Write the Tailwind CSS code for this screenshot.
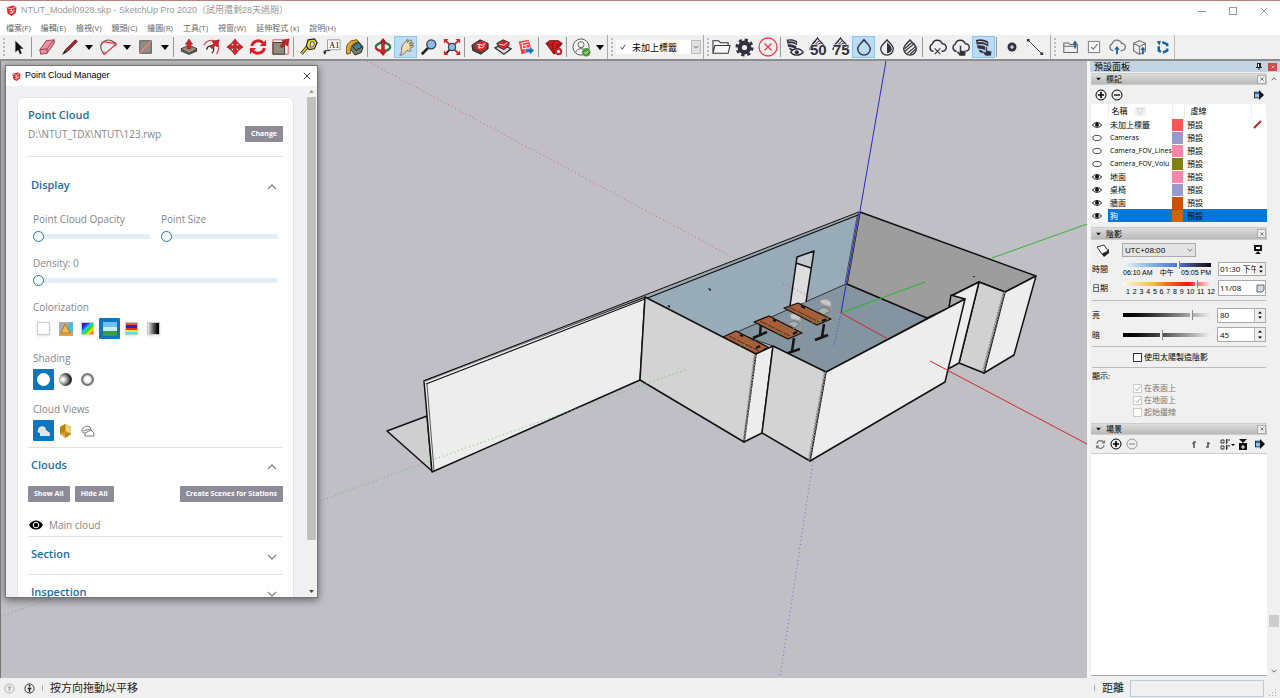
<!DOCTYPE html>
<html lang="zh-Hant">

<head>
    <meta charset="UTF-8" />
    <meta name="viewport" content="width=device-width, initial-scale=1.0" />
    <title>NTUT_Model0928.skp - SketchUp Pro 2020</title>
    <script src="https://cdn.jsdelivr.net/npm/@tailwindcss/browser@4"></script>
</head>

<body class="h-screen overflow-hidden flex flex-col bg-[#f0f0f0] border-t border-[#b38480] text-[9px] text-black font-['Open_Sans','Noto_Sans_CJK_TC',sans-serif]">
    <!-- shared icons -->
    <svg class="hidden">
        <symbol id="logo" viewBox="0 0 20 20">
            <path d="M1 4 13 1l6 3-1 10-8 6-7-4z" fill="#e3252c" />
            <path d="M2 5l8 2 7-3M6 10l6 1 4-2M6 14l4 1 5-3M10 7v4M11 11v4" fill="none" stroke="#fff" stroke-width="1.300" />
        </symbol>
        <symbol id="eye" viewBox="0 0 10 8">
            <path d="M.5 4C2.500.8 7.500.8 9.500 4 7.500 7 2.500 7 .5 4z" fill="#fff" stroke="#111" stroke-width="1" />
            <circle cx="5" cy="3.800" r="2" fill="#111" />
        </symbol>
        <symbol id="eye-off" viewBox="0 0 10 8">
            <ellipse cx="5" cy="4" rx="4.200" ry="2.600" fill="#fff" stroke="#333" stroke-width=".9" />
        </symbol>
        <symbol id="plus" viewBox="0 0 12 12">
            <path d="M6 3v6M3 6h6" stroke="currentColor" stroke-width="1.600" />
            <circle cx="6" cy="6" r="5" fill="none" stroke="currentColor" stroke-width="1" />
        </symbol>
        <symbol id="minus" viewBox="0 0 12 12">
            <path d="M3 6h6" stroke="currentColor" stroke-width="1.300" />
            <circle cx="6" cy="6" r="5" fill="none" stroke="currentColor" stroke-width="1" />
        </symbol>
        <symbol id="detail" viewBox="0 0 12 12">
            <path d="M0 2h6V0l6 6-6 6v-2H0z" fill="#111" />
            <path d="M1 3h5v6H1z" fill="#8cc4ee" />
            <path d="M1 3h5v1.500H1z" fill="#1f4e86" />
        </symbol>
        <symbol id="x" viewBox="0 0 10 10">
            <path d="M1 1l8 8M9 1 1 9" stroke="currentColor" stroke-width="1.200" />
        </symbol>
        <symbol id="down" viewBox="0 0 10 6">
            <path d="M1 1l4 4 4-4" fill="none" stroke="currentColor" stroke-width="1.300" />
        </symbol>
        <symbol id="up" viewBox="0 0 10 6">
            <path d="M1 5l4-4 4 4" fill="none" stroke="currentColor" stroke-width="1.300" />
        </symbol>
        <symbol id="tri" viewBox="0 0 8 5">
            <path d="M0 0h8L4 5z" fill="currentColor" />
        </symbol>
        <symbol id="cloud" viewBox="0 0 20 20">
            <path d="M6 14H5a4 4 0 0 1-.5-7.500A5.500 5.500 0 0 1 15 6a4 4 0 0 1 .5 8H14" fill="none" stroke="currentColor" stroke-width="1.500" />
        </symbol>
        <symbol id="layers" viewBox="0 0 20 20">
            <path d="M1 8l9-6 9 4v6l-8 6-9-4z" fill="#4a4640" stroke="#222" />
            <path d="M4 7l8-4 6 3-1 6-6 3-6-3z" fill="#df2a2f" />
            <path d="M7 7l6 1 3-2M8 10l4 1 3-2M9 7v5" stroke="#fff" fill="none" />
        </symbol>
        <symbol id="wall" viewBox="0 0 20 20">
            <path d="M2 2c5-1 8-1 13 2v5c-5-3-8-3-12-2zM3 8c4-1 7 0 11 2v4c-4-2-6-3-10-3zM5 12l8 3v3c-3-2-5-2-7-3z" fill="#33313f" />
            <path d="M4 4c3-1 7 0 10 2" stroke="#ddd" fill="none" />
        </symbol>
        <symbol id="drop-cloud" viewBox="0 0 20 20">
            <path d="M2 13C2 8 7 5 9.500 1 12 5 17 8 17 11" fill="none" stroke="#33313f" stroke-width="1.400" />
            <path d="M3 9l5-5M4 10l7-6M8 8l5-2" stroke="#33313f" />
        </symbol>
    </svg>

    <!-- title bar -->
    <header class="bg-white shrink-0">
        <div class="flex items-center h-[19px] pl-[6px]">
            <svg class="w-[11px] h-[11px] mr-1"><use href="#logo" /></svg>
            <h1 class="text-[9px] text-[#999] font-['Liberation_Sans','Noto_Sans_CJK_TC',sans-serif]">NTUT_Model0928.skp - SketchUp Pro 2020（試用還剩28天過期）</h1>
            <div class="ml-auto flex items-center gap-[23px] pr-3 text-[#999]">
                <button aria-label="Minimize"><svg class="w-2 h-2 block"><path d="M0 4.500h8" stroke="currentColor" /></svg></button>
                <button aria-label="Maximize"><svg class="w-2 h-2 block"><rect x=".5" y=".5" width="7" height="7" fill="none" stroke="currentColor" /></svg></button>
                <button aria-label="Close"><svg class="w-2 h-2 block"><use href="#x" /></svg></button>
            </div>
        </div>
        <nav class="flex items-center h-[15px] pl-[6px] gap-[10px] text-[8px] leading-[14px] text-[#666]">
            <button>檔案(F)</button>
            <button>編輯(E)</button>
            <button>檢視(V)</button>
            <button>鏡頭(C)</button>
            <button>繪圖(R)</button>
            <button>工具(T)</button>
            <button>視窗(W)</button>
            <button>延伸程式 (x)</button>
            <button>說明(H)</button>
        </nav>
    </header>

    <!-- toolbar -->
    <div class="flex items-stretch shrink-0 h-[26px] border-b-2 border-[#8c8e8d] [&>button]:flex [&>button]:items-center [&>button]:justify-center [&>button]:shrink-0 [&>button]:my-px">
        <div class="w-[7px] py-[3px] pl-[3px]"><div class="h-full border-l-2 border-dotted border-[#bbb]"></div></div>
        <button aria-label="Select" class="w-[23px]"><svg class="w-[18px] h-[18px]" viewBox="0 0 20 20"><path d="M6 3v13l3-3 2 5 2-1-2-5h4z" fill="#111" /></svg></button>
        <div class="w-[5px] border-l border-[#999] my-[2px] ml-px -mr-px"></div>
        <button aria-label="Eraser" class="w-[23px]"><svg class="w-[18px] h-[18px]" viewBox="0 0 20 20"><path d="M2 13 9 3l9-1v4l-8 11-7 1z" fill="#f08fa3" stroke="#85424f" /><path d="M2 13l8-1 8-10M10 12v5" stroke="#85424f" fill="none" /></svg></button>
        <button aria-label="Line" class="w-[23px]"><svg class="w-[18px] h-[18px]" viewBox="0 0 20 20"><path d="M3 17 5 13 16 2l2 2L7 15z" fill="#b8262a" stroke="#4a1614" /><path d="M1 19l3-5 2 2z" fill="#222" /></svg></button>
        <button aria-label="Line options" class="w-[15px]"><svg class="w-2 h-[5px]"><use href="#tri" /></svg></button>
        <button aria-label="Arc" class="w-[23px]"><svg class="w-[18px] h-[18px]" viewBox="0 0 20 20"><path d="M6 18C0 12 1 5 7 3c4-2 9 0 12 4" fill="none" stroke="#555" stroke-width="1.300" /><path d="M6 18 19 7M2 8l3-4 13 2" fill="none" stroke="#e23b40" stroke-width="1.300" /><circle cx="6" cy="17" r="1.500" fill="none" stroke="#e23b40" /><circle cx="18" cy="7" r="1.500" fill="none" stroke="#e23b40" /></svg></button>
        <button aria-label="Arc options" class="w-[15px]"><svg class="w-2 h-[5px]"><use href="#tri" /></svg></button>
        <button aria-label="Rectangle" class="w-[23px]"><svg class="w-[18px] h-[18px]" viewBox="0 0 20 20"><path d="M3 3h13v14H3z" fill="#8f8c80" stroke="#555" /><path d="M3 17 16 3" stroke="#f58080" stroke-width="1.500" /></svg></button>
        <button aria-label="Shape options" class="w-[15px]"><svg class="w-2 h-[5px]"><use href="#tri" /></svg></button>
        <div class="w-[5px] border-l border-[#999] my-[2px] ml-px -mr-px"></div>
        <button aria-label="Push/Pull" class="w-[23px]"><svg class="w-[18px] h-[18px]" viewBox="0 0 20 20"><path d="M1 12l9-4 9 4-9 5z" fill="#96927f" stroke="#333" /><path d="M1 12v3l9 4 9-4v-3l-9 5z" fill="#55524a" /><path d="M8 12V7H6l4-6 4 6h-2v5z" fill="#e02228" stroke="#7b1114" stroke-width=".6" /></svg></button>
        <button aria-label="Offset" class="w-[23px]"><svg class="w-[18px] h-[18px]" viewBox="0 0 20 20"><path d="M1 8C5 1 14 1 17 8c1 4 0 7-2 10" fill="none" stroke="#e04a4a" stroke-width="1.400" /><path d="M4 13c1-5 7-6 8-1 0 3-1 4-2 5" fill="none" stroke="#333" stroke-width="1.400" /><path d="M8 10l4-4-2-2 8-2-2 8-2-2-4 4z" fill="#d91e25" stroke="#6b1010" stroke-width=".6" /></svg></button>
        <button aria-label="Move" class="w-[23px]"><svg class="w-[18px] h-[18px]" viewBox="0 0 20 20"><path d="M10 1l4 5h-2.500v2.500H14V6l5 4-5 4v-2.500h-2.500V14H14l-4 5-4-5h2.500v-2.500H6V14l-5-4 5-4v2.500h2.500V6H6z" fill="#dc1f26" stroke="#7b1114" stroke-width=".6" /></svg></button>
        <button aria-label="Rotate" class="w-[23px]"><svg class="w-[18px] h-[18px]" viewBox="0 0 20 20"><path d="M3 9c1-6 9-8 13-3M17 11c-1 6-9 8-13 3" fill="none" stroke="#dc1f26" stroke-width="3.200" /><path d="M19 2v7h-7zM1 18v-7h7z" fill="#dc1f26" /></svg></button>
        <button aria-label="Scale" class="w-[23px]"><svg class="w-[18px] h-[18px]" viewBox="0 0 20 20"><path d="M1 2h17v16H1z" fill="none" stroke="#e64a4a" /><path d="M1 5h13v13H1z" fill="#8f8c7c" stroke="#333" /><path d="M9 9l4-4-2-2 8-2-2 8-2-2-4 4z" fill="#d91e25" stroke="#6b1010" stroke-width=".6" /></svg></button>
        <div class="w-[5px] border-l border-[#999] my-[2px] ml-px -mr-px"></div>
        <button aria-label="Tape measure" class="w-[23px]"><svg class="w-[18px] h-[18px]" viewBox="0 0 20 20"><path d="M9 11l-6 7-2-2 6-7z" fill="#d7c32b" stroke="#222" /><path d="M9 2l7-1 3 4-3 7-6 1-3-4z" fill="#ecd92f" stroke="#222" stroke-width="1.300" /><path d="M12 4h3l1 3-2 3h-3z" fill="#d8d8d0" stroke="#555" /></svg></button>
        <button aria-label="Text" class="w-[23px]"><svg class="w-[18px] h-[18px]" viewBox="0 0 20 20"><path d="M5 2h14v11H5z" fill="#fafafa" stroke="#999" /><path d="M8 14H2v3" fill="none" stroke="#222" /><path d="M0 15h4l-2 4z" fill="#222" /><text x="7" y="11" font-size="9" font-family="Liberation Serif">A1</text></svg></button>
        <button aria-label="Paint bucket" class="w-[23px]"><svg class="w-[18px] h-[18px]" viewBox="0 0 20 20"><path d="M6 5l6-3 7 8-2 6-7 3-6-8z" fill="#7a7a68" stroke="#222" /><path d="M7 9l7-4 4 5-7 4z" fill="#3f8296" stroke="#222" /><path d="M1 18C-1 11 1 6 6 3l6-1 2 2-5 2c-4 3-4 6-4 11z" fill="#e0a32c" stroke="#6a4c15" /></svg></button>
        <div class="w-[5px] border-l border-[#999] my-[2px] ml-px -mr-px"></div>
        <button aria-label="Orbit" class="w-[23px]"><svg class="w-[18px] h-[18px]" viewBox="0 0 20 20"><ellipse cx="10" cy="10" rx="8" ry="4.500" fill="none" stroke="#2c7a48" stroke-width="2.600" /><path d="M8.500 4h3v12h-3z" fill="#db2228" stroke="#6b1010" stroke-width=".6" /><path d="M6 5l4-5 4 5zM6 15h8l-4 5z" fill="#b8181e" /><path d="M2 11c2 4 8 4 11 3" fill="none" stroke="#db2228" stroke-width="2.400" /></svg></button>
        <button aria-label="Pan" class="w-[23px] bg-[#bcdcf4] border border-[#90c4ec]"><svg class="w-[18px] h-[18px] shrink-0" viewBox="0 0 20 20"><path d="M3 19c2-1 2-3 2-5 0-4 1-7 4-9l2-3h1.500l-1 3 4-3 1 1-3 4 4-2 .7 1.200L14 9l4-1 .3 1.300-4.300 2.500 2 2-1 1-4-1c-2 3-4 4-6 5.200z" fill="#f0dcb0" stroke="#5b4b33" stroke-width=".8" /></svg></button>
        <button aria-label="Zoom" class="w-[23px]"><svg class="w-[18px] h-[18px]" viewBox="0 0 20 20"><path d="M9 11l-7 7" stroke="#222" stroke-width="3" /><circle cx="12.500" cy="7" r="5" fill="#8fbbe0" stroke="#31465a" stroke-width="1.500" /></svg></button>
        <button aria-label="Zoom extents" class="w-[23px]"><svg class="w-[18px] h-[18px]" viewBox="0 0 20 20"><path d="M8 12l-5 6" stroke="#222" stroke-width="2" /><path d="M3 3l14 14M17 3l-5 5" stroke="#dc1f26" stroke-width="2" /><circle cx="10" cy="10" r="4" fill="#8fbbe0" stroke="#31465a" stroke-width="1.300" /><path d="M1 1h5L1 6zM19 1v5l-5-5zM19 19h-5l5-5zM1 19v-5l5 5z" fill="#dc1f26" /></svg></button>
        <div class="w-[5px] border-l border-[#999] my-[2px] ml-px -mr-px"></div>
        <button aria-label="3D Warehouse" class="w-[23px]"><svg class="w-[18px] h-[18px]"><use href="#layers" /></svg></button>
        <button aria-label="Share model" class="w-[23px]"><svg class="w-[18px] h-[18px]" viewBox="0 0 20 20"><path d="M1 11l8-4 10 5-8 6z" fill="#ddd" stroke="#333" stroke-width="1.500" /><path d="M3 6l7-4 7 3-1 4-5 4-6-3z" fill="#dc2228" stroke="#333" /><path d="M6 7l5 1 4-3" fill="none" stroke="#fff" /></svg></button>
        <button aria-label="LayOut" class="w-[23px]"><svg class="w-[18px] h-[18px]" viewBox="0 0 20 20"><path d="M2 4l11-2 4 13-12 3z" fill="#ee4247" /><path d="M4 6l9-2M5 9l8-2M6 6v6M6 12l8-1M10 8v4" stroke="#fff" fill="none" /><path d="M9 12h5V9l5 5-5 5v-3H9z" fill="#1673c0" stroke="#fff" stroke-width=".6" /></svg></button>
        <div class="w-[5px] border-l border-[#999] my-[2px] ml-px -mr-px"></div>
        <button aria-label="Extension Warehouse" class="w-[23px]"><svg class="w-[18px] h-[18px]" viewBox="0 0 20 20"><path d="M1 6l4-3h10l4 3-9 12z" fill="#d5171e" stroke="#6b1010" /><path d="M2 6l6 2 3-5M8 8l2 9 4-9 5-2" stroke="#7b1114" fill="none" /><circle cx="15" cy="15" r="3" fill="#f0f0f0" stroke="#b32a30" stroke-width="2.200" /></svg></button>
        <div class="w-[5px] border-l border-[#999] my-[2px] ml-px -mr-px"></div>
        <button aria-label="Account" class="w-[23px]"><svg class="w-[19px] h-[19px]" viewBox="0 0 20 20"><circle cx="9.500" cy="9.500" r="8.500" fill="#f8f8f8" stroke="#555" /><circle cx="9.500" cy="7" r="3.200" fill="none" stroke="#555" /><path d="M4 15c1-5 10-5 11 0" fill="none" stroke="#555" /><circle cx="15" cy="15" r="4.500" fill="#4c9a3a" /><path d="M13 15l1.500 1.500L17 13.500" fill="none" stroke="#fff" /></svg></button>
        <button aria-label="Account options" class="w-[13px] mr-px"><svg class="w-2 h-[5px]"><use href="#tri" /></svg></button>
        <div class="w-[9px] border-l border-[#aaa] py-[3px] pl-[3px]"><div class="h-full border-l-2 border-dotted border-[#bbb]"></div></div>
        <div class="relative my-[5px] w-[85px]">
            <select aria-label="標籤" class="appearance-none w-full h-full bg-white pl-[16px] text-[9px] leading-none">
                <option>未加上標籤</option>
            </select>
            <svg class="absolute left-1 top-1 w-[6px] h-[6px]" viewBox="0 0 8 8"><path d="M1 4l2 3 4-6" fill="none" stroke="#111" /></svg>
            <span class="absolute right-0 inset-y-0 w-[10px] bg-[#e1e1e1] border border-[#bbb] flex items-center justify-center pointer-events-none"><svg class="w-[6px] h-1 text-[#555]" viewBox="0 0 10 6"><use href="#down" /></svg></span>
        </div>
        <div class="w-2 border-l border-[#aaa] ml-[2px] -mr-px py-[3px] pl-[3px]"><div class="h-full border-l-2 border-dotted border-[#bbb]"></div></div>
        <button aria-label="Open" class="w-[23px]"><svg class="w-[19px] h-[19px]" viewBox="0 0 20 20"><path d="M1 16V3h6l2 2h8v3M1 16 3 8h16l-2 8z" fill="#f7f7f7" stroke="#33313f" stroke-width="1.100" /></svg></button>
        <button aria-label="Settings" class="w-[23px]"><svg class="w-[19px] h-[19px]" viewBox="0 0 20 20"><circle cx="10" cy="10" r="5" fill="none" stroke="#33313f" stroke-width="4.500" /><circle cx="10" cy="10" r="8" fill="none" stroke="#33313f" stroke-width="3" stroke-dasharray="3.280 3" /></svg></button>
        <button aria-label="Cancel" class="w-[23px]"><svg class="w-5 h-5" viewBox="0 0 20 20"><circle cx="10" cy="10" r="9" fill="none" stroke="#ee3e44" stroke-width="1.300" /><path d="M6.500 6.500l7 7m0-7l-7 7" stroke="#ee3e44" stroke-width="1.300" /></svg></button>
        <div class="w-1 border-l border-[#999] my-[2px] ml-px -mr-px"></div>
        <button aria-label="Show cloud" class="w-[23px]"><svg class="w-[19px] h-[19px]" viewBox="0 0 20 20"><use href="#wall" width="17" height="17" /><path d="M6 15c3-5 10-5 13 0-3 4-10 4-13 0z" fill="#f0f0f0" stroke="#33313f" stroke-width="1.500" /><circle cx="12.500" cy="15" r="2.200" fill="#33313f" /></svg></button>
        <button aria-label="Density 50" class="w-[23px]"><svg class="w-[20px] h-[20px]" viewBox="0 0 20 20"><use href="#drop-cloud" /><text x="2" y="18" font-size="15" font-family="Liberation Sans" font-weight="700" fill="#33313f" stroke="#f0f0f0" stroke-width="1" paint-order="stroke">50</text></svg></button>
        <button aria-label="Density 75" class="w-[23px]"><svg class="w-[20px] h-[20px]" viewBox="0 0 20 20"><use href="#drop-cloud" /><text x="2" y="18" font-size="15" font-family="Liberation Sans" font-weight="700" fill="#33313f" stroke="#f0f0f0" stroke-width="1" paint-order="stroke">75</text></svg></button>
        <button aria-label="Transparent" class="w-[23px] bg-[#bcdcf4] border border-[#90c4ec]"><svg class="w-[18px] h-[18px] shrink-0" viewBox="0 0 20 20"><path d="M10 2C7 6 3 8 3 12a7 7 0 0 0 14 0c0-4-4-6-7-10z" fill="none" stroke="#33313f" stroke-width="1.600" /></svg></button>
        <button aria-label="Half" class="w-[23px]"><svg class="w-[18px] h-[18px]" viewBox="0 0 20 20"><path d="M10 2C7 6 3 8 3 12a7 7 0 0 0 14 0c0-4-4-6-7-10z" fill="none" stroke="#33313f" stroke-width="1.500" /><path d="M10 5v12c7-1 7-7 0-12z" fill="#33313f" /></svg></button>
        <button aria-label="Hatched" class="w-[23px]"><svg class="w-[18px] h-[18px]" viewBox="0 0 20 20"><path d="M10 2C7 6 3 8 3 12a7 7 0 0 0 14 0c0-4-4-6-7-10z" fill="none" stroke="#33313f" stroke-width="1.500" /><path d="M4 12l8-7M4 15l11-9M7 17l10-8M10 18l7-6" stroke="#33313f" stroke-width="1.300" /></svg></button>
        <div class="w-[5px] border-l border-[#999] my-[2px] ml-px -mr-px"></div>
        <button aria-label="Clear cloud" class="w-[23px] text-[#33313f]"><svg class="w-[19px] h-[19px]" viewBox="0 0 20 20"><use href="#cloud" /><path d="M6 10h8v8H6z" fill="#f0f0f0" /><path d="M7 11l6 6m0-6l-6 6" stroke="currentColor" stroke-width="1.200" /></svg></button>
        <button aria-label="Pick cloud" class="w-[23px] text-[#33313f]"><svg class="w-[19px] h-[19px]" viewBox="0 0 20 20"><use href="#cloud" /><path d="M9 8h2v5l5 1-1 5h-6l-3-4 1-1 2 1z" fill="currentColor" stroke="#f0f0f0" stroke-width=".5" /></svg></button>
        <button aria-label="Pick wall" class="w-[23px] bg-[#bcdcf4] border border-[#90c4ec]"><svg class="w-[19px] h-[19px] shrink-0" viewBox="0 0 20 20"><use href="#wall" /><path d="M12 9h2v4l5 1-1 5h-6l-3-4 1-1 2 1z" fill="#33313f" stroke="#bcdcf4" stroke-width=".8" /></svg></button>
        <div class="w-[5px] border-l border-[#999] my-[2px] ml-px -mr-px"></div>
        <button aria-label="Point" class="w-[23px]"><svg class="w-[10px] h-[10px]" viewBox="0 0 10 10"><circle cx="5" cy="5" r="4.500" fill="#33313f" /><path d="M5 3v4M3 5h4" stroke="#fff" /></svg></button>
        <button aria-label="Segment" class="w-[23px]"><svg class="w-[18px] h-[18px]" viewBox="0 0 20 20"><path d="M2 2l16 16" stroke="#33313f" /><path d="M1 1h3v3H1zM16 16h3v3h-3z" fill="#33313f" /></svg></button>
        <div class="w-[9px] ml-1 border-l border-[#aaa] py-[3px] pl-[3px]"><div class="h-full border-l-2 border-dotted border-[#bbb]"></div></div>
        <button aria-label="Open from Connect" class="w-[23px]"><svg class="w-4 h-4" viewBox="0 0 20 20"><path d="M1 17V5h6l2 2h9v10zM1 9h17" fill="none" stroke="#666" stroke-width="1.300" /><path d="M14 12V6h-2l3-4 3 4h-2v6z" fill="#17629f" /></svg></button>
        <button aria-label="Tasks" class="w-[23px]"><svg class="w-[14px] h-[14px]" viewBox="0 0 20 20"><path d="M2 2h16v16H2z" fill="#f7f7f7" stroke="#777" stroke-width="1.400" /><path d="M6 10l3 3 6-7" fill="none" stroke="#777" stroke-width="1.600" /></svg></button>
        <button aria-label="Upload" class="w-[23px] text-[#777]"><svg class="w-[18px] h-[18px]" viewBox="0 0 20 20"><use href="#cloud" /><path d="M9 18v-5H7l3-4 3 4h-2v5z" fill="#17629f" /></svg></button>
        <button aria-label="Upload model" class="w-[23px]"><svg class="w-[17px] h-[17px]" viewBox="0 0 20 20"><path d="M10 2l7 3v9l-7 4-7-4V5zM3 5l7 4 7-4M10 9v9" fill="none" stroke="#777" stroke-width="1.300" /><path d="M13 18v-5h-2l3-4 3 4h-2v5z" fill="#17629f" /></svg></button>
        <button aria-label="Trimble Connect" class="w-[23px]"><svg class="w-[14px] h-[14px]" viewBox="0 0 20 20"><path d="M9 3 16 6v3M16 12v3l-6 3M7 17l-3-2V9" fill="none" stroke="#0b64a5" stroke-width="3.500" /><path d="M1 2l6-1-2 7z" fill="#0b64a5" /></svg></button>
        <div class="border-r border-[#bbb]"></div>
    </div>

    <main class="flex flex-1 min-h-0">
        <!-- viewport -->
        <section class="relative flex-1 min-w-0 bg-[#bfbfc5] border-l border-[#777] overflow-hidden">
            <svg class="block w-full h-full" viewBox="1 61 1086 617" preserveAspectRatio="xMidYMid slice" stroke-linejoin="round">
                <g fill="none" stroke-width="1">
                    <path d="M367 61 736 259" stroke="#c86a70" stroke-dasharray="1 3" />
                    <path d="M0 617 424 463" stroke="#70ae76" stroke-dasharray="1 3" />
                    <path d="M813 461 780 678" stroke="#6a6ac4" stroke-dasharray="1 3" />
                    <path d="M886 61 860 211" stroke="#2a2acb" />
                    <path d="M992 258 1087 224" stroke="#34b434" />
                </g>
                <g stroke="#111" stroke-width="1.500">
                    <path d="M387 431 427 416 432 471z" fill="#cfcfcf" />
                    <path d="M645 297 859 212 846 284 735 333z" fill="#97abb8" stroke="none" />
                    <path d="M846 284 927 318 826 372 773 346 735 333z" fill="#8494a1" stroke="#333" stroke-width="1" />
                    <path d="M645 297 735 333 760 355z" fill="#97abb8" stroke="none" />
                    <path d="M860 212 1036 276 1005 292 979 282 951 296 949 308 927 318 847 284z" fill="#9d9d9d" />
                    <path d="M859 212 846 284" stroke="#444" stroke-width="3" />
                    <path d="M859 212 846 284" stroke="#93a3ad" />
                    <path d="M424 381 645 297 640 380 432 472z" fill="#ededed" />
                    <path d="M424 381 859 212M426 384 645 299 858 215" fill="none" stroke-width="1.200" />
                    <path d="M424 382 859 213" fill="none" stroke="#999" stroke-width="1" />
                    <path d="M427 384 434 470" fill="none" stroke="#555" stroke-width="1" />
                    <path d="M979 282 1005 292 984 373 959 363z" fill="#d1d1d1" />
                    <path d="M1005 292 1036 276 1014 355 984 373z" fill="#ededed" />
                    <path d="M951 296 979 282 959 363 948 369z" fill="#ededed" />
                    <path d="M951 295 965 299 949 308z" fill="#aaa" />
                </g>
                <!-- door and marks on the wall -->
                <path d="M797 257 814 251 806 302 790 306z" fill="#ddd" />
                <path d="M797 257 814 251 811 268 796 263z" fill="#c3cbd0" />
                <path d="M790 306 797 257 814 251 806 302M796 263 811 268" fill="none" stroke="#111" stroke-width="1.500" />
                <path d="M708 288l3 1v2l-2-1zM667 306l3-1v3M973 276h2v1h-2z" fill="#222" />
                <!-- chairs -->
                <g fill="#a9b0b4" stroke="#555" stroke-width=".6">
                    <path d="M820 301q5-4 11 1v5l-10-3z" fill="#c6c8c9" stroke="#999" />
                    <path d="M817 310l7-3 7 4-8 4z" />
                    <path d="M790 315q5-4 10 1l1 5-10-2z" fill="#c6c8c9" stroke="#999" />
                    <path d="M787 323l7-2 6 3-6 4z" />
                    <path d="M831 305v17M818 311v8M800 318v20M788 320v7" stroke="#ad9887" fill="none" stroke-width="1" />
                </g>
                <!-- desks -->
                <g fill="none" stroke="#151515" stroke-width="2.500">
                    <path d="M824 324l-2 13M815 340l13-5M794 338l-2 13M788 353l12-4M761 323l-1 12M753 338l14-6" />
                </g>
                <g fill="#a55f3b" stroke="#111" stroke-width="1.300">
                    <path d="M784 308 798 303 831 319 817 325z" />
                    <path d="M754 322 769 316 802 333 788 339z" />
                    <path d="M723 337 736 331 768 347 756 355z" />
                    <path d="M789 307l30 15M760 321l30 15M729 336l30 15" stroke-width=".6" stroke-dasharray="8 1" />
                    <path d="M801 306l4 2M826 319l-4 2M773 320l3 1M797 332l-4 2M740 335l3 1M760 346l-4 2" stroke-width="2" />
                </g>
                <!-- front walls -->
                <g stroke="#111" stroke-width="1.500">
                    <path d="M645 297 756 354 744 442 640 380z" fill="#d3d3d3" />
                    <path d="M756 354 773 346 762 433 744 442z" fill="#ededed" />
                    <path d="M773 346 826 372 810 461 762 433z" fill="#d3d3d3" />
                    <path d="M826 372 965 299 945 382 810 461z" fill="#ededed" />
                    <path d="M825 372 809 461M755 355 744 441M1004 292 983 372" stroke="#888" stroke-width="2.500" stroke-dasharray="2 1" />
                </g>
                <!-- axes -->
                <g fill="none" stroke-width="1">
                    <path d="M859 212 841 313" stroke="#2a2acb" />
                    <path d="M841 313 834 346" stroke="#4545c4" stroke-dasharray="1 2" />
                    <path d="M841 313 925 282" stroke="#22b822" />
                    <path d="M424 463 685 370M740 346 841 313" stroke="#5dc062" stroke-dasharray="1 3" />
                    <path d="M783 283 841 313" stroke="#d05555" stroke-dasharray="1 3" />
                    <path d="M841 313 888 339M930 361 1087 444" stroke="#cf2a2a" />
                </g>
            </svg>

            <!-- point cloud manager window -->
            <div role="dialog" aria-label="Point Cloud Manager" class="absolute left-1 top-1 w-[313px] h-[533px] flex flex-col bg-[#f1f0f5] border border-[#777] shadow-[0_2px_8px_rgba(0,0,0,0.5)] text-[10px] text-[#85858b]">
                <div class="flex items-center h-5 shrink-0 bg-white px-[6px]">
                    <svg class="w-[9px] h-[9px] mr-1"><use href="#logo" /></svg>
                    <h2 class="text-[9px] text-black font-['Liberation_Sans',sans-serif]">Point Cloud Manager</h2>
                    <button aria-label="Close" class="ml-auto text-[#333]"><svg class="w-2 h-2 block"><use href="#x" /></svg></button>
                </div>
                <div class="flex flex-1 min-h-0">
                    <div class="flex-1 pl-[11px] pr-3 pt-[11px] overflow-hidden">
                        <div class="bg-white rounded-t-md border border-[#e3e2e6] px-[10px] pt-2 h-[560px]">
                            <h3 class="text-[11px] leading-[18px] font-semibold text-[#1b6ea8]">Point Cloud</h3>
                            <div class="flex items-center justify-between h-5">
                                <p>D:\NTUT_TDX\NTUT\123.rwp</p>
                                <button class="bg-[#8d8b98] text-white text-[7px] leading-4 font-bold px-[6px] rounded-[1px]">Change</button>
                            </div>
                            <hr class="border-[#e2e2e4] mt-3" />
                            <div class="flex items-center justify-between px-[3px] mt-[18px] h-5">
                                <h3 class="text-[11px] font-semibold text-[#1b6ea8]">Display</h3>
                                <button aria-label="Collapse Display" class="pt-1 pr-[3px]"><svg class="w-[10px] h-[6px] block"><use href="#up" /></svg></button>
                            </div>
                            <div class="px-[5px] pt-4">
                                <div class="grid grid-cols-2 gap-[11px]">
                                    <div>
                                        <label for="opacity" class="block leading-[17px]">Point Cloud Opacity</label>
                                        <input id="opacity" type="range" value="0" class="block w-full h-4 appearance-none bg-transparent [&::-webkit-slider-runnable-track]:h-[5px] [&::-webkit-slider-runnable-track]:rounded-full [&::-webkit-slider-runnable-track]:bg-[#e3eff8] [&::-webkit-slider-thumb]:appearance-none [&::-webkit-slider-thumb]:w-[11px] [&::-webkit-slider-thumb]:h-[11px] [&::-webkit-slider-thumb]:-mt-[3px] [&::-webkit-slider-thumb]:rounded-full [&::-webkit-slider-thumb]:bg-white [&::-webkit-slider-thumb]:border-[1px] [&::-webkit-slider-thumb]:border-[#1478bc]" />
                                    </div>
                                    <div>
                                        <label for="size" class="block leading-[17px]">Point Size</label>
                                        <input id="size" type="range" value="0" class="block w-full h-4 appearance-none bg-transparent [&::-webkit-slider-runnable-track]:h-[5px] [&::-webkit-slider-runnable-track]:rounded-full [&::-webkit-slider-runnable-track]:bg-[#e3eff8] [&::-webkit-slider-thumb]:appearance-none [&::-webkit-slider-thumb]:w-[11px] [&::-webkit-slider-thumb]:h-[11px] [&::-webkit-slider-thumb]:-mt-[3px] [&::-webkit-slider-thumb]:rounded-full [&::-webkit-slider-thumb]:bg-white [&::-webkit-slider-thumb]:border-[1px] [&::-webkit-slider-thumb]:border-[#1478bc]" />
                                    </div>
                                </div>
                                <label for="density" class="block leading-[18px] mt-[10px]">Density: 0</label>
                                <input id="density" type="range" value="0" class="block w-full h-4 appearance-none bg-transparent [&::-webkit-slider-runnable-track]:h-[5px] [&::-webkit-slider-runnable-track]:rounded-full [&::-webkit-slider-runnable-track]:bg-[#e3eff8] [&::-webkit-slider-thumb]:appearance-none [&::-webkit-slider-thumb]:w-[11px] [&::-webkit-slider-thumb]:h-[11px] [&::-webkit-slider-thumb]:-mt-[3px] [&::-webkit-slider-thumb]:rounded-full [&::-webkit-slider-thumb]:bg-white [&::-webkit-slider-thumb]:border-[1px] [&::-webkit-slider-thumb]:border-[#1478bc]" />
                                <p class="leading-[18px] mt-[10px]">Colorization</p>
                                <div class="flex mt-[2px] h-[21px] [&>button]:w-[21px] [&>button]:flex [&>button]:items-center [&>button]:justify-center [&>button]:mr-px [&_span]:w-[13px] [&_span]:h-[13px] [&_span]:border [&_span]:border-[#ccc] [&_span]:shadow-sm">
                                    <button aria-label="None"><span class="bg-white"></span></button>
                                    <button aria-label="Normals"><svg class="w-[14px] h-[14px]" viewBox="0 0 14 14"><path d="M0 0h14v14H0z" fill="#a9adb0" /><path d="M10 0h4v11H8z" fill="#57b5dd" /><path d="M0 11h14v3H0z" fill="#e7a04f" /><path d="M6 2l5 9H2z" fill="#f3c04b" stroke="#b77c22" /></svg></button>
                                    <button aria-label="Rainbow"><span class="bg-[linear-gradient(135deg,#4a148c_10%,#1d3bff_28%,#17dfe0_45%,#2ad11b_58%,#f7e414_76%,#ff3b10)]"></span></button>
                                    <button aria-label="Scan color" class="bg-[#0d76bf] rounded-[1px]"><svg class="w-[14px] h-[14px]" viewBox="0 0 14 14"><path d="M0 0h14v8H0z" fill="#6cc0ec" /><path d="M0 5h14v4H0z" fill="#cbeaf6" /><path d="M0 9h14v5H0z" fill="#369f3b" /></svg></button>
                                    <button aria-label="Elevation"><span class="bg-[linear-gradient(#ff4b3e_0_18%,#2424c9_18%_42%,#f22_42%_60%,#ffef28_60%_80%,#50e3e0_80%)]"></span></button>
                                    <button aria-label="Intensity"><span class="bg-linear-to-r from-[#eee] to-black"></span></button>
                                </div>
                                <p class="leading-[18px] mt-[10px]">Shading</p>
                                <div class="flex mt-[2px] h-[21px] [&>button]:w-[21px] [&>button]:flex [&>button]:items-center [&>button]:justify-center [&>button]:mr-px">
                                    <button aria-label="Flat" class="bg-[#0d76bf] rounded-[1px]"><span class="w-[13px] h-[13px] rounded-full bg-white"></span></button>
                                    <button aria-label="Shaded"><span class="w-[13px] h-[13px] rounded-full bg-[radial-gradient(circle_at_30%_50%,#fff_10%,#333_65%,#000)]"></span></button>
                                    <button aria-label="Outline"><span class="w-[13px] h-[13px] rounded-full border-2 border-[#777] bg-[radial-gradient(circle,#fff_40%,#888)]"></span></button>
                                </div>
                                <p class="leading-[18px] mt-[10px]">Cloud Views</p>
                                <div class="flex mt-[2px] h-[21px] [&>button]:w-[21px] [&>button]:flex [&>button]:items-center [&>button]:justify-center [&>button]:mr-px">
                                    <button aria-label="Cloud" class="bg-[#0d76bf] rounded-[1px]"><svg class="w-[14px] h-[12px]" viewBox="0 0 14 12"><path d="M1 5C1 2 5 0 8 2l1 3 4 3v3H3V8C1 8 0 7 1 5z" fill="#e4e4e4" /></svg></button>
                                    <button aria-label="Stations"><svg class="w-[13px] h-[14px]" viewBox="0 0 13 14"><path d="M6.500 0 12 3v7l-5.500 4L1 10V3z" fill="#d9aa37" /><path d="M6 0v8l-5 2V3zM6 8l6 2-6 4z" fill="#b98417" /><path d="M7 1v6l5 2V4z" fill="#f2d67a" /></svg></button>
                                    <button aria-label="Outline cloud"><svg class="w-[14px] h-[12px]" viewBox="0 0 14 12"><path d="M1 5C2 2 6 0 9 2l1 3 3 3v3H4V8C2 8 0 7 1 5zM2 6l7-2M4 8l6-3" fill="none" stroke="#777" /></svg></button>
                                </div>
                            </div>
                            <hr class="border-[#e2e2e4] mt-[6px]" />
                            <div class="flex items-center justify-between px-[3px] mt-[7px] h-5">
                                <h3 class="text-[11px] font-semibold text-[#1b6ea8]">Clouds</h3>
                                <button aria-label="Collapse Clouds" class="pt-1 pr-[3px]"><svg class="w-[10px] h-[6px] block"><use href="#up" /></svg></button>
                            </div>
                            <div class="flex gap-[5px] mt-[11px] text-[7px] leading-4 font-bold text-white [&>button]:bg-[#8d8b98] [&>button]:px-[6px] [&>button]:rounded-[1px]">
                                <button>Show All</button>
                                <button>Hide All</button>
                                <button class="ml-auto">Create Scenes for Stations</button>
                            </div>
                            <div class="flex items-center gap-[6px] mt-3 h-[22px] pl-px">
                                <button aria-label="Toggle Main cloud"><svg class="w-[14px] h-[10px] block" viewBox="0 0 14 10"><path d="M0 5C3-1 11-1 14 5 11 11 3 11 0 5z" fill="#000" /><circle cx="7" cy="5" r="2.800" fill="none" stroke="#fff" /></svg></button>
                                <span>Main cloud</span>
                            </div>
                            <hr class="border-[#e2e2e4]" />
                            <div class="flex items-center justify-between px-[3px] h-[35px]">
                                <h3 class="text-[11px] font-semibold text-[#1b6ea8]">Section</h3>
                                <button aria-label="Expand Section" class="pt-1 pr-[3px]"><svg class="w-[10px] h-[6px] block"><use href="#down" /></svg></button>
                            </div>
                            <hr class="border-[#e2e2e4] mt-[2px]" />
                            <div class="flex items-center justify-between px-[3px] h-[34px]">
                                <h3 class="text-[11px] font-semibold text-[#1b6ea8]">Inspection</h3>
                                <button aria-label="Expand Inspection" class="pt-1 pr-[3px]"><svg class="w-[10px] h-[6px] block"><use href="#down" /></svg></button>
                            </div>
                        </div>
                    </div>
                    <div class="w-[11px] bg-[#f1f1f1] flex flex-col items-center justify-between">
                        <svg class="w-[5px] h-[3px] mt-1 rotate-180 text-[#999]" viewBox="0 0 8 5"><use href="#tri" /></svg>
                        <div class="w-[9px] h-[443px] bg-[#c1c1c1] mt-[4px] mb-auto"></div>
                        <svg class="w-[5px] h-[3px] mb-1 text-[#444]" viewBox="0 0 8 5"><use href="#tri" /></svg>
                    </div>
                </div>
            </div>
        </section>

        <!-- default tray -->
        <aside class="w-[193px] shrink-0 flex flex-col bg-[#f0f0f0] border-l-[3px] border-[#f6f6f6]">
            <div class="flex items-center h-[11px] shrink-0 bg-[#c4d3e2] pl-1 pr-[3px]">
                <h2 class="text-[9px] leading-[11px]">預設面板</h2>
                <button aria-label="Pin" class="ml-auto mr-[6px]"><svg class="w-[6px] h-[7px] block" viewBox="0 0 6 7"><path d="M1 0h4v4H1zM0 4h6v1H0zM2.500 5h1v2h-1z" fill="#222" /><path d="M2 1h1v3H2z" fill="#fff" /></svg></button>
                <button aria-label="Close tray" class="w-[9px] h-2 bg-[#cf4a4d] text-white flex items-center justify-center"><svg class="w-1 h-1" viewBox="0 0 10 10"><use href="#x" /></svg></button>
            </div>
            <div class="flex flex-1 min-h-0">
                <div class="flex-1 min-w-0 flex flex-col px-px">
                    <h3 class="flex items-center shrink-0 h-3 mt-px px-[5px] pr-px bg-linear-to-b from-[#ddd] to-[#b9b9b9] border-y border-[#ccc] text-[8px]">
                        <svg class="w-[5px] h-1 mr-[5px]" viewBox="0 0 8 5"><use href="#tri" /></svg>標記
                        <button aria-label="Close tags" class="ml-auto w-[9px] h-[9px] bg-[#eee] border border-[#aaa] flex items-center justify-center"><svg class="w-1 h-1" viewBox="0 0 10 10"><use href="#x" /></svg></button>
                    </h3>
                    <div class="flex items-center shrink-0 h-[19px] px-1 gap-1">
                        <button aria-label="Add tag"><svg class="w-3 h-3 block"><use href="#plus" /></svg></button>
                        <button aria-label="Remove tag"><svg class="w-3 h-3 block"><use href="#minus" /></svg></button>
                        <button aria-label="Tag details" class="ml-auto -mr-px"><svg class="w-[10px] h-[10px] block"><use href="#detail" /></svg></button>
                    </div>
                    <table class="w-full table-fixed bg-white text-left text-[8px] leading-[12px] [&_td]:p-0 [&_td]:h-[13px] [&_td]:whitespace-nowrap [&_td]:overflow-hidden [&_td>svg]:block [&_td:nth-child(2)]:pl-[2px] [&_td:nth-child(4)]:pl-[3px]">
                        <thead>
                            <tr class="h-[14px] [&>th]:font-normal [&>th]:p-0 [&>th]:border-r [&>th]:border-[#eee]">
                                <th class="w-[17px]"></th>
                                <th class="w-[64px]"><span class="pl-[3px]">名稱</span> <span class="ml-[5px] bg-[#f0f0f0] px-[2px] text-[7px] text-[#999]">▽</span></th>
                                <th class="w-[12px]"></th>
                                <th class="w-[67px] text-left"><span class="pl-[6px]">虛線</span></th>
                                <th></th>
                            </tr>
                        </thead>
                        <tbody>
                            <tr><td><svg class="w-[10px] h-2 ml-px"><use href="#eye" /></svg></td><td>未加上標籤</td><td><div class="w-[11px] h-3 bg-[#ff5656]"></div></td><td>預設</td><td><svg class="w-[9px] h-[9px] ml-[2px]" viewBox="0 0 9 9"><path d="M1 8l7-7" stroke="#a82b2b" stroke-width="2" /></svg></td></tr>
                            <tr><td><svg class="w-[10px] h-2 ml-px"><use href="#eye-off" /></svg></td><td class="text-[7px]">Cameras</td><td><div class="w-[11px] h-3 bg-[#9999cc]"></div></td><td>預設</td><td></td></tr>
                            <tr><td><svg class="w-[10px] h-2 ml-px"><use href="#eye-off" /></svg></td><td class="text-[7px]">Camera_FOV_Lines</td><td><div class="w-[11px] h-3 bg-[#ff85a9]"></div></td><td>預設</td><td></td></tr>
                            <tr><td><svg class="w-[10px] h-2 ml-px"><use href="#eye-off" /></svg></td><td class="text-[7px]">Camera_FOV_Volu</td><td><div class="w-[11px] h-3 bg-[#808014]"></div></td><td>預設</td><td></td></tr>
                            <tr><td><svg class="w-[10px] h-2 ml-px"><use href="#eye" /></svg></td><td>地面</td><td><div class="w-[11px] h-3 bg-[#ff85a9]"></div></td><td>預設</td><td></td></tr>
                            <tr><td><svg class="w-[10px] h-2 ml-px"><use href="#eye" /></svg></td><td>桌椅</td><td><div class="w-[11px] h-3 bg-[#9999cc]"></div></td><td>預設</td><td></td></tr>
                            <tr><td><svg class="w-[10px] h-2 ml-px"><use href="#eye" /></svg></td><td>牆面</td><td><div class="w-[11px] h-3 bg-[#cc5200]"></div></td><td>預設</td><td></td></tr>
                            <tr><td><svg class="w-[10px] h-2 ml-px"><use href="#eye" /></svg></td><td class="bg-[#0078d7] text-white">狗</td><td class="bg-[#0078d7]"><div class="w-[11px] h-3 bg-[#cc6600]"></div></td><td class="bg-[#0078d7]">預設</td><td class="bg-[#0078d7]"></td></tr>
                        </tbody>
                    </table>

                    <h3 class="flex items-center shrink-0 h-[13px] mt-[5px] px-[5px] pr-px bg-linear-to-b from-[#ddd] to-[#b9b9b9] border-y border-[#ccc] text-[8px]">
                        <svg class="w-[5px] h-1 mr-[5px]" viewBox="0 0 8 5"><use href="#tri" /></svg>陰影
                        <button aria-label="Close shadows" class="ml-auto w-[9px] h-[9px] bg-[#eee] border border-[#aaa] flex items-center justify-center"><svg class="w-1 h-1" viewBox="0 0 10 10"><use href="#x" /></svg></button>
                    </h3>
                    <div class="shrink-0 px-px text-[8px]">
                        <div class="flex items-center h-5">
                            <button aria-label="Toggle shadows" class="pl-1"><svg class="w-[14px] h-[13px] block" viewBox="0 0 14 13"><path d="M5 9l8-4v4l-5 4z" fill="#222" /><path d="M1 3l7-2 4 6-6 3z" fill="#fff" stroke="#333" /></svg></button>
                            <div class="relative ml-3 w-[74px] h-[14px]">
                                <select aria-label="Time zone" class="appearance-none w-full h-full bg-[#e3e3e3] border border-[#aaa] pl-[2px] text-[8px] leading-none">
                                    <option>UTC+08:00</option>
                                </select>
                                <svg class="absolute right-[3px] top-[5px] w-[6px] h-1 text-[#555] pointer-events-none" viewBox="0 0 10 6"><use href="#down" /></svg>
                            </div>
                            <button aria-label="Shadow details" class="ml-auto mr-1"><svg class="w-2 h-[10px] block" viewBox="0 0 8 10"><path d="M0 0h8v6H0zM4 6l3 3H1z" fill="#111" /><path d="M2 2h4v2H2z" fill="#fff" /></svg></button>
                        </div>
                        <div class="flex items-center h-[18px]">
                            <label for="time" class="w-[31px] shrink-0">時間</label>
                            <div class="w-[88px]">
                                <input id="time" type="range" value="64" class="block w-full h-[7px] appearance-none bg-transparent [&::-webkit-slider-runnable-track]:h-1 [&::-webkit-slider-runnable-track]:bg-[linear-gradient(90deg,#eef6fa,#86b8dc_30%,#4a6be0_65%,#334_85%,#0a0a20)] [&::-webkit-slider-thumb]:appearance-none [&::-webkit-slider-thumb]:w-[3px] [&::-webkit-slider-thumb]:h-2 [&::-webkit-slider-thumb]:-mt-[2px] [&::-webkit-slider-thumb]:bg-[#eee] [&::-webkit-slider-thumb]:border-r [&::-webkit-slider-thumb]:border-[#888]" />
                                <div class="flex justify-between text-[7px] leading-[8px] font-['Liberation_Sans','Noto_Sans_CJK_TC',sans-serif]"><span>06:10 AM</span><span>中午</span><span>05:05 PM</span></div>
                            </div>
                            <div class="ml-auto flex w-12 h-[14px] bg-white border border-[#aaa]">
                                <input aria-label="Time" type="text" value="01:30 下午" class="w-0 flex-1 pl-px text-[8px] leading-3" />
                                <div class="w-[9px] flex flex-col items-center justify-evenly bg-[#eee]"><button aria-label="Later" class="rotate-180"><svg class="w-1 h-[3px] block" viewBox="0 0 8 5"><use href="#tri" /></svg></button><button aria-label="Earlier"><svg class="w-1 h-[3px] block" viewBox="0 0 8 5"><use href="#tri" /></svg></button></div>
                            </div>
                        </div>
                        <div class="flex items-center h-5">
                            <label for="date" class="w-[31px] shrink-0">日期</label>
                            <div class="w-[92px]">
                                <input id="date" type="range" value="86" class="block w-[87px] h-2 appearance-none bg-transparent [&::-webkit-slider-runnable-track]:h-1 [&::-webkit-slider-runnable-track]:bg-[linear-gradient(90deg,#fff7e8,#efc038_35%,#f07018_50%,#f01810_75%,#f8e8e8)] [&::-webkit-slider-thumb]:appearance-none [&::-webkit-slider-thumb]:w-[3px] [&::-webkit-slider-thumb]:h-2 [&::-webkit-slider-thumb]:-mt-[2px] [&::-webkit-slider-thumb]:bg-[#eee] [&::-webkit-slider-thumb]:border-r [&::-webkit-slider-thumb]:border-[#888]" />
                                <div class="flex justify-between pl-[3px] text-[7px] leading-[8px] font-['Liberation_Sans',sans-serif]"><span>1</span><span>2</span><span>3</span><span>4</span><span>5</span><span>6</span><span>7</span><span>8</span><span>9</span><span>10</span><span>11</span><span>12</span></div>
                            </div>
                            <div class="ml-auto flex items-center w-12 h-4 bg-white border border-[#aaa]">
                                <input aria-label="Date" type="text" value="11/08" class="w-0 flex-1 pl-px text-[8px]" />
                                <button aria-label="Calendar"><svg class="w-[9px] h-[9px] block" viewBox="0 0 9 9"><path d="M1 1h7v5L6 8H1z" fill="#d5d9e2" stroke="#667" /></svg></button>
                            </div>
                        </div>
                        <hr class="border-[#bbb] mt-[2px] mb-1" />
                        <div class="flex items-center h-5">
                            <label for="light" class="w-[31px] shrink-0">亮</label>
                            <input id="light" type="range" value="80" class="block w-[87px] h-[10px] appearance-none bg-transparent [&::-webkit-slider-runnable-track]:h-1 [&::-webkit-slider-runnable-track]:bg-linear-to-r [&::-webkit-slider-runnable-track]:from-black [&::-webkit-slider-runnable-track]:to-[#eee] [&::-webkit-slider-thumb]:appearance-none [&::-webkit-slider-thumb]:w-[3px] [&::-webkit-slider-thumb]:h-[10px] [&::-webkit-slider-thumb]:-mt-[3px] [&::-webkit-slider-thumb]:bg-[#eee] [&::-webkit-slider-thumb]:border-r [&::-webkit-slider-thumb]:border-[#888]" />
                            <div class="ml-auto flex w-[49px] h-[15px] bg-white border border-[#aaa]">
                                <input aria-label="Light value" type="text" value="80" class="w-0 flex-1 pl-[2px] text-[8px]" />
                                <div class="w-[11px] border-l border-[#bbb] flex flex-col items-center justify-evenly bg-[#eee]"><button aria-label="Lighter" class="rotate-180"><svg class="w-1 h-[3px] block" viewBox="0 0 8 5"><use href="#tri" /></svg></button><button aria-label="Less light"><svg class="w-1 h-[3px] block" viewBox="0 0 8 5"><use href="#tri" /></svg></button></div>
                            </div>
                        </div>
                        <div class="flex items-center h-[19px]">
                            <label for="dark" class="w-[31px] shrink-0">暗</label>
                            <input id="dark" type="range" value="44" class="block w-[87px] h-[10px] appearance-none bg-transparent [&::-webkit-slider-runnable-track]:h-1 [&::-webkit-slider-runnable-track]:bg-linear-to-r [&::-webkit-slider-runnable-track]:from-black [&::-webkit-slider-runnable-track]:to-[#eee] [&::-webkit-slider-thumb]:appearance-none [&::-webkit-slider-thumb]:w-[3px] [&::-webkit-slider-thumb]:h-[10px] [&::-webkit-slider-thumb]:-mt-[3px] [&::-webkit-slider-thumb]:bg-[#eee] [&::-webkit-slider-thumb]:border-r [&::-webkit-slider-thumb]:border-[#888]" />
                            <div class="ml-auto flex w-[49px] h-[15px] bg-white border border-[#aaa]">
                                <input aria-label="Dark value" type="text" value="45" class="w-0 flex-1 pl-[2px] text-[8px]" />
                                <div class="w-[11px] border-l border-[#bbb] flex flex-col items-center justify-evenly bg-[#eee]"><button aria-label="Darker" class="rotate-180"><svg class="w-1 h-[3px] block" viewBox="0 0 8 5"><use href="#tri" /></svg></button><button aria-label="Less dark"><svg class="w-1 h-[3px] block" viewBox="0 0 8 5"><use href="#tri" /></svg></button></div>
                            </div>
                        </div>
                        <hr class="border-[#bbb] mt-[2px]" />
                        <div class="flex items-center h-5 pl-[41px]">
                            <input id="sun" type="checkbox" class="appearance-none w-[9px] h-[9px] bg-white border border-[#333] mr-[2px]" />
                            <label for="sun">使用太陽製造陰影</label>
                        </div>
                        <hr class="border-[#bbb]" />
                        <p class="h-[14px] leading-[16px]">顯示:</p>
                        <div class="pl-[41px] text-[#777] [&>div]:flex [&>div]:items-center [&>div]:h-3 [&_label]:leading-3">
                            <div><span class="relative mr-[2px] flex"><input id="faces" type="checkbox" checked disabled class="appearance-none w-[9px] h-[9px] bg-white border border-[#ccc]" /><svg class="absolute inset-0 w-[9px] h-[9px]" viewBox="0 0 9 9"><path d="M2 4.500l2 2L7.500 2.500" fill="none" stroke="#aaa" /></svg></span><label for="faces">在表面上</label></div>
                            <div><span class="relative mr-[2px] flex"><input id="ground" type="checkbox" checked disabled class="appearance-none w-[9px] h-[9px] bg-white border border-[#ccc]" /><svg class="absolute inset-0 w-[9px] h-[9px]" viewBox="0 0 9 9"><path d="M2 4.500l2 2L7.500 2.500" fill="none" stroke="#aaa" /></svg></span><label for="ground">在地面上</label></div>
                            <div><input id="edges" type="checkbox" disabled class="appearance-none w-[9px] h-[9px] bg-white border border-[#ccc] mr-[2px]" /><label for="edges">起始邊線</label></div>
                        </div>
                    </div>

                    <h3 class="flex items-center shrink-0 h-3 mt-[5px] px-[5px] pr-px bg-linear-to-b from-[#ddd] to-[#b9b9b9] border-y border-[#ccc] text-[8px]">
                        <svg class="w-[5px] h-1 mr-[5px]" viewBox="0 0 8 5"><use href="#tri" /></svg>場景
                        <button aria-label="Close scenes" class="ml-auto w-[9px] h-[9px] bg-[#eee] border border-[#aaa] flex items-center justify-center"><svg class="w-1 h-1" viewBox="0 0 10 10"><use href="#x" /></svg></button>
                    </h3>
                    <div class="flex items-center shrink-0 h-[18px] pl-1 gap-1">
                        <button aria-label="Update scene" class="text-[#777]"><svg class="w-[11px] h-[11px] block" viewBox="0 0 12 12"><path d="M2 5c1-4 6-4 8-1M10 7c-1 4-6 4-8 1" fill="none" stroke="currentColor" stroke-width="1.300" /><path d="M11 1v4H7zM1 11V7h4z" fill="currentColor" /></svg></button>
                        <button aria-label="Add scene"><svg class="w-3 h-3 block"><use href="#plus" /></svg></button>
                        <button aria-label="Remove scene" class="text-[#999]"><svg class="w-3 h-3 block"><use href="#minus" /></svg></button>
                        <button aria-label="Move up" class="ml-auto"><svg class="w-[9px] h-[9px] block" viewBox="0 0 9 9"><path d="M4 8V2h2" fill="none" stroke="#555" stroke-width="1.600" /><path d="M2 4l2-2" stroke="#555" /></svg></button>
                        <button aria-label="Move down"><svg class="w-[9px] h-[9px] block" viewBox="0 0 9 9"><path d="M3 7h2V2" fill="none" stroke="#555" stroke-width="1.600" /><path d="M5 2l2 2" stroke="#555" /></svg></button>
                        <button aria-label="View options" class="ml-1"><svg class="w-[15px] h-[11px] block" viewBox="0 0 15 11"><path d="M1 1h3v3H1zM1 7h3v3H1z" fill="none" stroke="#333" /><path d="M6.500 0v5M6 1h4M6 3h2M6.500 6v5M6 7h4M6 9h2" stroke="#333" /><path d="M11 5h4l-2 2z" /></svg></button>
                        <button aria-label="Show details"><svg class="w-2 h-[11px] block" viewBox="0 0 8 11"><path d="M0 0h8L4 4zM0 4h8v7H0z" fill="#111" /><path d="M4 6v4M2 8h4" stroke="#fff" /></svg></button>
                        <button aria-label="Scene menu" class="ml-1 mr-[2px]"><svg class="w-[10px] h-[10px] block"><use href="#detail" /></svg></button>
                    </div>
                    <div class="flex-1 bg-white border-t border-[#ccc]"></div>
                    <div class="h-[3px] shrink-0 border-t border-[#aaa]"></div>
                </div>
                <div class="w-3 flex flex-col items-center py-[5px] text-[#444]">
                    <svg class="w-[6px] h-1" viewBox="0 0 10 6"><use href="#up" /></svg>
                    <div class="w-[10px] h-3 mt-auto mb-[42px] bg-[#cdcdcd]"></div>
                    <svg class="w-[6px] h-1" viewBox="0 0 10 6"><use href="#down" /></svg>
                </div>
            </div>
        </aside>
    </main>

    <!-- status bar -->
    <footer class="flex items-center h-5 shrink-0 pl-1 text-[11px] text-[#222]">
        <svg class="w-[11px] h-[11px] text-[#aaa]" viewBox="0 0 12 12"><circle cx="6" cy="6" r="5" fill="none" stroke="currentColor" /><path d="M6 3v6M4 5h4" stroke="currentColor" stroke-width="1.500" /></svg>
        <svg class="w-[11px] h-[11px] ml-[9px]" viewBox="0 0 12 12"><circle cx="6" cy="6" r="5" fill="none" stroke="currentColor" /><path d="M6 5v5M6 2v2M4 6h4" stroke="currentColor" stroke-width="1.500" /></svg>
        <span class="w-px h-[6px] bg-[#aaa] ml-[7px] mr-[7px]"></span>
        <p>按方向拖動以平移</p>
        <div class="ml-auto flex items-center w-[186px] pr-[3px]">
            <span class="w-px h-[6px] bg-[#aaa] mr-[7px]"></span>
            <label for="distance">距離</label>
            <input id="distance" type="text" class="ml-[6px] w-0 flex-1 h-[17px] bg-[#f0f0f0] border border-[#b9cbe0]" />
            <svg class="ml-1 w-[9px] h-[9px] self-end" viewBox="0 0 9 9"><path d="M7 1h1v1H7zM7 4h1v1H7zM4 4h1v1H4zM7 7h1v1H7zM4 7h1v1H4zM1 7h1v1H1z" fill="#aaa" /></svg>
        </div>
    </footer>
</body>

</html>
